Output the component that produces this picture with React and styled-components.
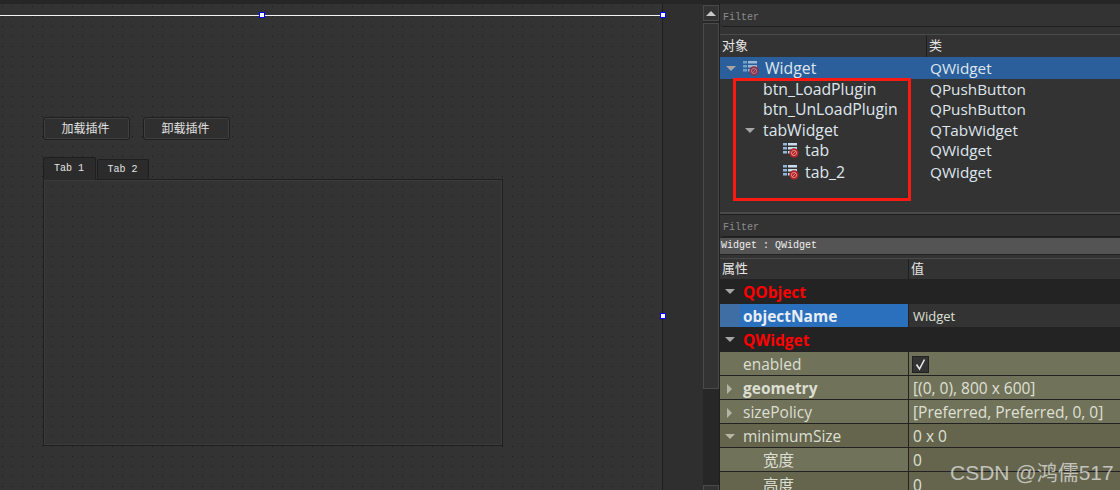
import React from "react";
import styled, { createGlobalStyle } from "styled-components";

const Global = createGlobalStyle`
  html, body { margin: 0; padding: 0; background: #2b2b2b; }
  #root { width: 1120px; height: 490px; overflow: hidden; }
`;

const Shell = styled.div`
  position: relative;
  width: 1120px;
  height: 490px;
  display: grid;
  grid-template-columns: 703px 17px 400px;
  grid-template-rows: 4px 486px;
  overflow: hidden;
  font-family: "Open Sans", "Noto Sans CJK SC", sans-serif;
  color: #dfe6ee;
`;

const TopBar = styled.div`
  grid-column: 1 / 4;
  background: #262626;
`;

const Canvas = styled.div`
  position: relative;
  display: flex;
  background: #2f2f2f;
  overflow: hidden;
`;

const FormArea = styled.div`
  width: 662px;
  border-right: 1px solid #1e1e1e;
  background-color: #333333;
  background-image: radial-gradient(circle at 2.5px 2.5px, #1c1c1c 0.55px, transparent 0.8px);
  background-size: 10px 10px;
`;

const FormTop = styled.div`
  height: 11px;
  border-bottom: 1px solid #f4f4f4;
`;

const Handle = styled.span`
  position: absolute;
  left: ${(p) => p.$x}px;
  top: ${(p) => p.$y}px;
  width: 4px;
  height: 4px;
  background: #fff;
  border: 1px solid #0000ff;
`;

const Form = styled.div`
  display: flex;
  flex-direction: column;
  padding: 101px 0 0 43px;
`;

const ButtonRow = styled.div`
  display: flex;
  gap: 13px;
  margin-bottom: 17px;
`;

const FormButton = styled.div`
  box-sizing: border-box;
  width: 87px;
  height: 23px;
  border: 1px solid #1f1f1f;
  box-shadow: inset 0 0 0 1px #3f3f3f;
  border-radius: 3px;
  background: #2f2f2f;
  font: 12px "Noto Sans CJK SC", sans-serif;
  line-height: 19px;
  text-align: center;
  color: #e2e2e2;
  padding-right: 2px;
`;

const TabBar = styled.div`
  display: flex;
  align-items: flex-end;
  gap: 1px;
  height: 22px;
`;

const Tab = styled.div`
  box-sizing: border-box;
  width: ${(p) => (p.$active ? 53 : 52)}px;
  height: ${(p) => (p.$active ? 23 : 20)}px;
  border: 1px solid #1f1f1f;
  border-bottom: 0;
  border-top-left-radius: 2px;
  border-top-right-radius: 2px;
  background: #2b2b2b;
  font: 10px "Liberation Mono", monospace;
  line-height: ${(p) => (p.$active ? 22 : 20)}px;
  text-align: center;
  padding-right: 1px;
  color: #e4e4e4;
  margin-bottom: ${(p) => (p.$active ? -1 : 0)}px;
  z-index: 1;
`;

const TabPane = styled.div`
  box-sizing: border-box;
  width: 460px;
  height: 267px;
  border: 1px solid #1f1f1f;
  box-shadow: inset 0 0 0 1px #3b3b3b;
`;

const Scrollbar = styled.div`
  background: #272727;
  display: flex;
  flex-direction: column;
  gap: 2px;
  padding-top: 1px;
  position: relative;
  border-right: 1px solid #1f1f1f;
`;

const ScrollUp = styled.div`
  height: 14px;
  background: #333;
  border: 1px solid #4a4a4a;
  display: flex;
  align-items: center;
  justify-content: center;
  &::after {
    content: "";
    border: 5px solid transparent;
    border-top: 0;
    border-bottom: 5px solid #c8c8c8;
  }
`;

const ScrollThumb = styled.div`
  height: 364px;
  background: #333;
  border: 1px solid #4a4a4a;
`;

const ScrollDown = styled.div`
  position: absolute;
  left: 0;
  right: 0;
  top: 481px;
  height: 10px;
  background: #333;
  border: 1px solid #4a4a4a;
`;

const Panel = styled.div`
  position: relative;
  background: #333333;
  display: flex;
  flex-direction: column;
  font-size: 15.5px;
  overflow: hidden;
  & > * { flex-shrink: 0; }
`;

const FilterBox = styled.div`
  height: 21px;
  padding-left: 2px;
  margin-left: 1px;
  background: #333;
  border-bottom: 1px solid #1f1f1f;
  border-bottom-left-radius: 3px;
  font: 10px/25px "Liberation Mono", monospace;
  color: #8d8d8d;
  margin-top: ${(p) => p.$top || 0}px;
`;

const HeaderRow = styled.div`
  display: grid;
  grid-template-columns: ${(p) => p.$first}px 1fr;
  height: ${(p) => p.$h}px;
  background: #333;
  margin-top: ${(p) => p.$top || 0}px;
  border-top: 1px solid #4a4a4a;
  font: 13px/${(p) => p.$h - 2}px "Noto Sans CJK SC", sans-serif;
  color: #e6e6e6;
`;

const HeaderCell = styled.div`
  padding-left: 2px;
  & + & { border-left: 1px solid #1f1f1f; }
`;

const Tree = styled.div`
  height: 155px;
`;

const TreeRow = styled.div`
  display: grid;
  grid-template-columns: 209px 1fr;
  height: ${(p) => p.$h}px;
  line-height: ${(p) => p.$h}px;
  background: ${(p) => (p.$selected ? "#2a5f9b" : "transparent")};
`;

const TreeName = styled.div`
  position: relative;
  display: flex;
  align-items: center;
  font-size: 15.8px;
  padding-left: ${(p) => p.$indent}px;
`;

const Arrow = styled.span`
  position: absolute;
  left: ${(p) => p.$x}px;
  width: 0;
  height: 0;
  ${(p) =>
    p.$open
      ? `border-left: 5px solid transparent; border-right: 5px solid transparent; border-top: 5px solid ${p.$c || "#a6a6a6"};`
      : `border-top: 5px solid transparent; border-bottom: 5px solid transparent; border-left: 5px solid ${p.$c || "#a6a6a6"};`}
`;

const IconSlot = styled.span`
  position: absolute;
  left: ${(p) => p.$x}px;
  top: 2px;
  height: 17px;
  opacity: ${(p) => (p.$dim ? 0.72 : 1)};
`;

const TreeClass = styled.div`
  padding-left: 1px;
  font-size: 15.3px;
`;

const Marker = styled.div`
  position: absolute;
  left: 13px;
  top: 74px;
  width: 178px;
  height: 123px;
  box-sizing: border-box;
  border: 3px solid #fb1a12;
  pointer-events: none;
`;

const Divider = styled.div`
  height: 2px;
  background: #4a4a4a;
  border-bottom: 1px solid #1f1f1f;
`;

const ObjectBar = styled.div`
  height: 16px;
  padding-left: 1px;
  background: #545454;
  border-top: 1px solid #222;
  border-bottom: 1px solid #222;
  font: 10px/16px "Liberation Mono", monospace;
  color: #f0f0f0;
`;

const PropRow = styled.div`
  display: grid;
  grid-template-columns: 188px 1fr;
  height: ${(p) => p.$h}px;
  line-height: ${(p) => p.$h - 1}px;
  box-sizing: border-box;
  background: ${(p) => p.$bg};
  border-bottom: ${(p) => (p.$line ? "1px solid #222" : "0")};
`;

const OliveRow = styled(PropRow)`
  height: 24px;
  line-height: 21px;
  & > * { padding-top: 2px; }
`;

const PropName = styled.div`
  position: relative;
  display: flex;
  align-items: center;
  padding-left: ${(p) => p.$indent || 23}px;
  font-weight: ${(p) => (p.$bold ? 700 : 400)};
  color: ${(p) => p.$color || "#dcdfd2"};
  background: ${(p) => p.$bg || "transparent"};
`;

const PropSwatch = styled.span`
  position: absolute;
  left: 0;
  top: 0;
  bottom: 0;
  width: 20px;
  background: #3f6ea5;
`;

const PropValue = styled.div`
  border-left: 1px solid #222;
  padding-left: 4px;
  display: flex;
  align-items: center;
  font-size: ${(p) => p.$size || 15.5}px;
  color: #dfe0d5;
  background: ${(p) => p.$bg || "transparent"};
`;

const Check = styled.span`
  box-sizing: border-box;
  width: 17px;
  height: 17px;
  margin-left: -1px;
  background: #333;
  border: 1px solid #222;
  display: flex;
  align-items: center;
  justify-content: center;
`;

const Watermark = styled.div`
  position: absolute;
  left: 950px;
  top: 456px;
  font: 21px "Liberation Sans", "Noto Sans CJK SC", sans-serif;
  color: rgba(232, 232, 232, 0.72);
  white-space: nowrap;
`;

const WidgetIcon = () => (
  <svg width="16" height="16" viewBox="0 0 16 16">
    <rect x="0" y="1" width="4" height="2.5" fill="#8fb8dc" />
    <rect x="5" y="1" width="9" height="2.5" fill="#c9dcec" />
    <rect x="0" y="5" width="4" height="2.5" fill="#8fb8dc" />
    <rect x="5" y="5" width="9" height="2.5" fill="#c9dcec" />
    <rect x="0" y="9" width="4" height="2.5" fill="#8fb8dc" />
    <rect x="5" y="9" width="3" height="2.5" fill="#c9dcec" />
    <circle cx="11" cy="11" r="4.7" fill="#b3242a" />
    <circle cx="11" cy="11" r="2.6" fill="none" stroke="#e28c8c" strokeWidth="0.9" />
    <path d="M9 13 13 9" stroke="#e28c8c" strokeWidth="0.9" />
  </svg>
);

const treeRows = [
  { h: 22, selected: true, name: "Widget", cls: "QWidget", indent: 45, icon: 23, arrow: 6 },
  { h: 20, name: "btn_LoadPlugin", cls: "QPushButton", indent: 43 },
  { h: 21, name: "btn_UnLoadPlugin", cls: "QPushButton", indent: 43 },
  { h: 20, name: "tabWidget", cls: "QTabWidget", indent: 43, arrow: 25 },
  { h: 21, name: "tab", cls: "QWidget", indent: 85, icon: 63 },
  { h: 22, name: "tab_2", cls: "QWidget", indent: 85, icon: 63 },
];

const OL = "#71725a";
const OD = "#65654d";

export default function App() {
  return (
    <>
      <Global />
      <Shell>
        <TopBar />
        <Canvas>
          <FormArea>
            <FormTop />
            <Form>
              <ButtonRow>
                <FormButton>加载插件</FormButton>
                <FormButton>卸载插件</FormButton>
              </ButtonRow>
              <TabBar>
                <Tab $active>Tab 1</Tab>
                <Tab>Tab 2</Tab>
              </TabBar>
              <TabPane />
            </Form>
          </FormArea>
          <Handle $x={259} $y={8} />
          <Handle $x={660} $y={8} />
          <Handle $x={660} $y={309} />
        </Canvas>
        <Scrollbar>
          <ScrollUp />
          <ScrollThumb />
          <ScrollDown />
        </Scrollbar>
        <Panel>
          <FilterBox $top={1}>Filter</FilterBox>
          <HeaderRow $first={206} $h={22} $top={7}>
            <HeaderCell>对象</HeaderCell>
            <HeaderCell>类</HeaderCell>
          </HeaderRow>
          <Tree>
            {treeRows.map((r) => (
              <TreeRow key={r.name} $h={r.h} $selected={r.selected}>
                <TreeName $indent={r.indent}>
                  {r.arrow !== undefined && <Arrow $open $x={r.arrow} />}
                  {r.icon !== undefined && (
                    <IconSlot $x={r.icon} $dim={r.selected}>
                      <WidgetIcon />
                    </IconSlot>
                  )}
                  {r.name}
                </TreeName>
                <TreeClass>{r.cls}</TreeClass>
              </TreeRow>
            ))}
          </Tree>
          <Marker />
          <Divider />
          <FilterBox>Filter</FilterBox>
          <ObjectBar>Widget : QWidget</ObjectBar>
          <HeaderRow $first={188} $h={20} $top={3}>
            <HeaderCell>属性</HeaderCell>
            <HeaderCell>值</HeaderCell>
          </HeaderRow>
          <PropRow $h={25} $bg="#232323">
            <PropName $bold $color="#ff0000"><Arrow $open $x={5} />QObject</PropName>
            <div />
          </PropRow>
          <PropRow $h={23} $bg="#232323">
            <PropName $bold $color="#e8eef6" $bg="#2b70bd"><PropSwatch />objectName</PropName>
            <PropValue $size={13} $bg="#333">Widget</PropValue>
          </PropRow>
          <PropRow $h={25} $bg="#232323">
            <PropName $bold $color="#ff0000"><Arrow $open $x={5} />QWidget</PropName>
            <div />
          </PropRow>
          <OliveRow $bg={OL} $line>
            <PropName>enabled</PropName>
            <PropValue>
              <Check>
                <svg width="13" height="13" viewBox="0 0 13 13">
                  <path d="M2.5 6.5 5.5 11 10.5 1.5" fill="none" stroke="#e8e8e8" strokeWidth="1.6" />
                </svg>
              </Check>
            </PropValue>
          </OliveRow>
          <OliveRow $bg={OL} $line>
            <PropName $bold><Arrow $x={7} $c="#b5b5a5" />geometry</PropName>
            <PropValue>[(0, 0), 800 x 600]</PropValue>
          </OliveRow>
          <OliveRow $bg={OL} $line>
            <PropName><Arrow $x={7} $c="#b5b5a5" />sizePolicy</PropName>
            <PropValue>[Preferred, Preferred, 0, 0]</PropValue>
          </OliveRow>
          <OliveRow $bg={OD} $line>
            <PropName><Arrow $open $x={5} $c="#b5b5a5" />minimumSize</PropName>
            <PropValue>0 x 0</PropValue>
          </OliveRow>
          <OliveRow $bg={OD} $line>
            <PropName $indent={43} $bg={OL}>宽度</PropName>
            <PropValue>0</PropValue>
          </OliveRow>
          <OliveRow $bg={OD}>
            <PropName $indent={43}>高度</PropName>
            <PropValue>0</PropValue>
          </OliveRow>
        </Panel>
        <Watermark>CSDN @鸿儒517</Watermark>
      </Shell>
    </>
  );
}
